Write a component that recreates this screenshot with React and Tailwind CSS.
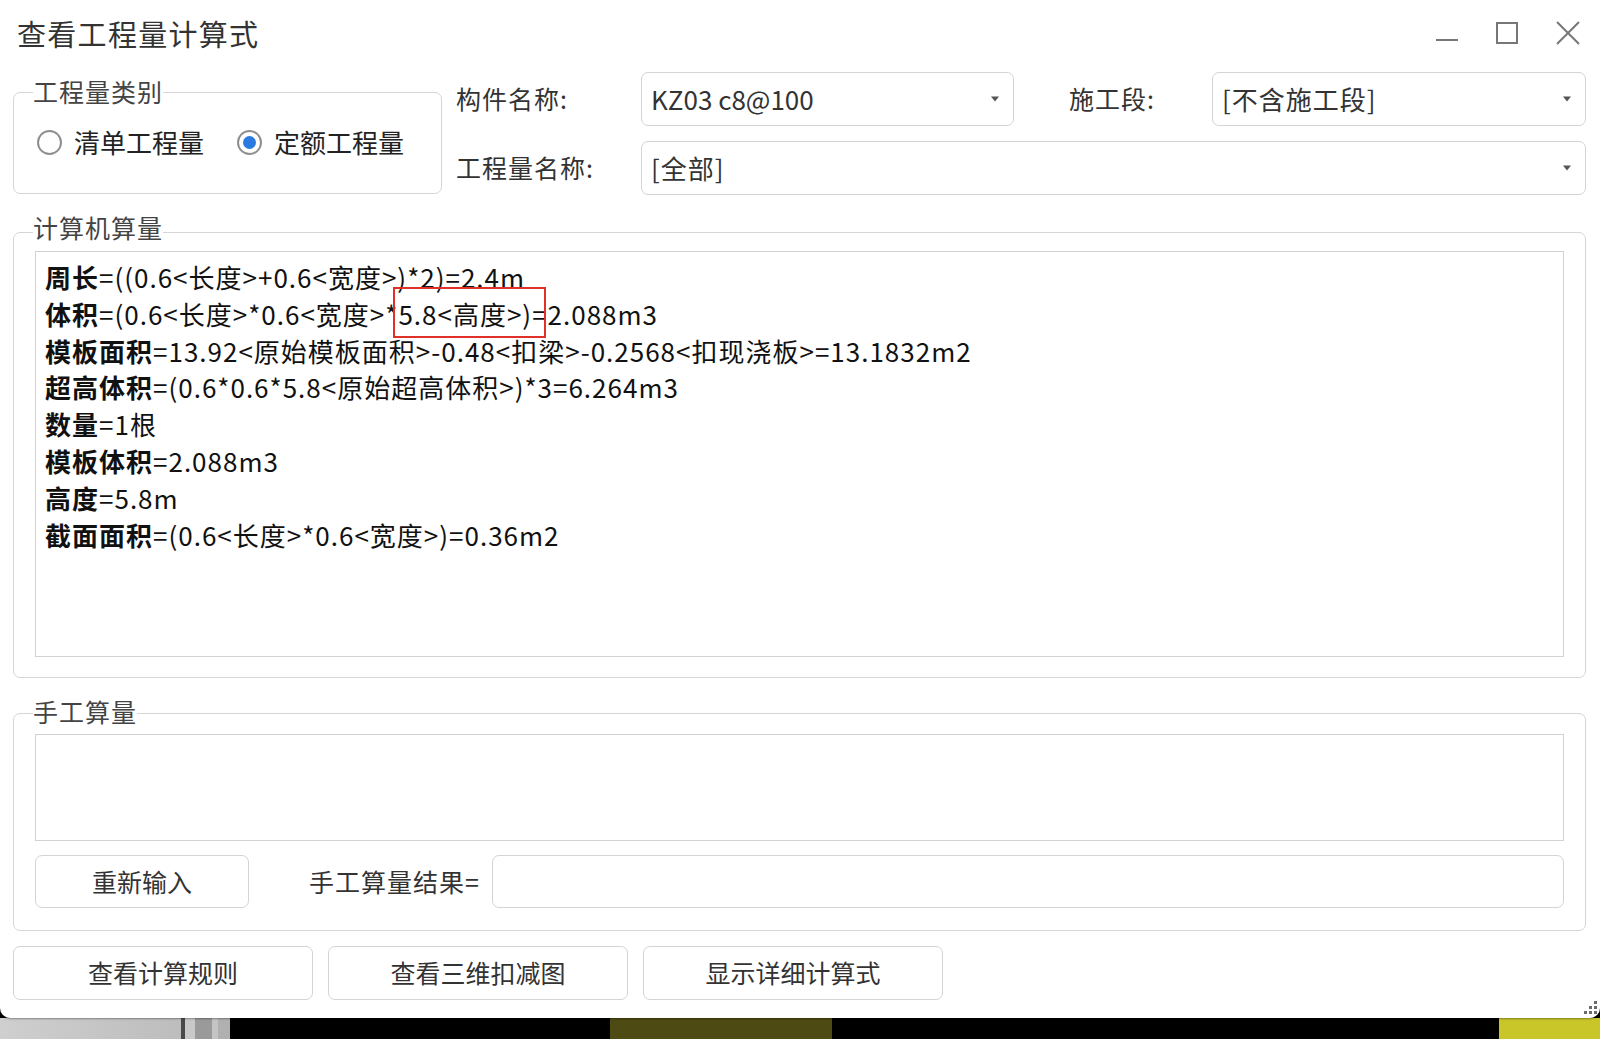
import React from "react";

const FONT = { fontFamily: '"Noto Sans CJK SC", "Noto Sans", sans-serif' };

function Arrow() {
  return (
    <svg width="10" height="6" viewBox="0 0 10 6" className="shrink-0">
      <path d="M1 0.5 L9 0.5 L5 5.5 Z" fill="#555" />
    </svg>
  );
}

function Combo({ value, className }) {
  return (
    <div
      className={`h-[54px] rounded-[7px] border border-[#d4d4d4] bg-white flex items-center pl-[9px] pr-[13px] text-[26px] text-[#333] ${className}`}
    >
      <span className="flex-1 leading-none">{value}</span>
      <Arrow />
    </div>
  );
}

function Group({ label, className, labelTop, children }) {
  return (
    <div className={`relative rounded-[7px] border border-[#d6d6d6] ${className}`}>
      <span
        className={`absolute left-[19px] ${labelTop} bg-white text-[25px] leading-[36px] tracking-[1px] text-[#444]`}
      >
        {label}
      </span>
      {children}
    </div>
  );
}

function Radio({ checked, label }) {
  return (
    <label className="flex items-center gap-[12px]">
      <span className="w-[25px] h-[25px] rounded-full border-[2px] border-[#8f8f8f] bg-white flex items-center justify-center">
        {checked && <span className="w-[13px] h-[13px] rounded-full bg-[#2a7ae2]" />}
      </span>
      <span className="text-[26px] text-[#222] leading-none">{label}</span>
    </label>
  );
}

function Btn({ children, className }) {
  return (
    <button
      className={`h-[53px] rounded-[7px] border border-[#d4d4d4] bg-white text-[25px] text-[#333] flex items-center justify-center ${className}`}
    >
      {children}
    </button>
  );
}

const lines = [
  ["周长", "=((0.6<长度>+0.6<宽度>)*2)=2.4m"],
  ["体积", "=(0.6<长度>*0.6<宽度>*5.8<高度>)=2.088m3"],
  ["模板面积", "=13.92<原始模板面积>-0.48<扣梁>-0.2568<扣现浇板>=13.1832m2"],
  ["超高体积", "=(0.6*0.6*5.8<原始超高体积>)*3=6.264m3"],
  ["数量", "=1根"],
  ["模板体积", "=2.088m3"],
  ["高度", "=5.8m"],
  ["截面面积", "=(0.6<长度>*0.6<宽度>)=0.36m2"],
];

export default function App() {
  return (
    <div className="w-[1600px] h-[1039px] flex flex-col bg-black overflow-hidden" style={FONT}>
      <div className="relative h-[1018px] bg-white rounded-b-[10px] shadow-[0_1px_2px_rgba(0,0,0,0.35)] z-10">
        {/* title bar */}
        <div className="h-[67px] flex items-center pl-[17px] pr-[20px]">
          <span className="flex-1 text-[29px] tracking-[1.3px] text-[#333] leading-none">查看工程量计算式</span>
          <div className="flex items-center gap-[38px] mt-[-2px]">
            <svg width="22" height="24" viewBox="0 0 22 24">
              <path d="M0 19 H22" stroke="#777" strokeWidth="2" />
            </svg>
            <svg width="22" height="24" viewBox="0 0 22 24">
              <rect x="1" y="2" width="20" height="20" fill="none" stroke="#777" strokeWidth="2" />
            </svg>
            <svg width="24" height="24" viewBox="0 0 24 24">
              <path d="M1 1 L23 23 M23 1 L1 23" stroke="#777" strokeWidth="2" />
            </svg>
          </div>
        </div>

        {/* top section */}
        <div className="flex pl-[13px] pr-[14px]">
          <Group label="工程量类别" labelTop="-top-[20px]" className="w-[429px] h-[102px] mt-[25px] shrink-0">
            <div className="flex items-center gap-[33px] pl-[23px] pt-[36px]">
              <Radio label="清单工程量" />
              <Radio checked label="定额工程量" />
            </div>
          </Group>
          <div className="flex-1 pl-[14px] pt-[5px] flex flex-col gap-[15px] tracking-[1px]">
            <div className="flex items-center">
              <span className="w-[185px] text-[25px] text-[#333]">构件名称:</span>
              <Combo value="KZ03 c8@100" className="w-[373px] tracking-normal" />
              <span className="w-[198px] pl-[55px] text-[25px] text-[#333]">施工段:</span>
              <Combo value="[不含施工段]" className="flex-1" />
            </div>
            <div className="flex items-center">
              <span className="w-[185px] text-[25px] text-[#333]">工程量名称:</span>
              <Combo value="[全部]" className="flex-1" />
            </div>
          </div>
        </div>

        {/* computer calc */}
        <div className="px-[14px] pl-[13px] mt-[37px]">
          <Group label="计算机算量" labelTop="-top-[24px]" className="h-[446px] pt-[18px] px-[21px]">
            <div className="relative h-[406px] border border-[#d2d2d2] pl-[9px] pt-[7px] text-[26px] leading-[36.8px] tracking-[1px] text-[#111]">
              {lines.map(([k, v]) => (
                <div key={k} className="whitespace-nowrap">
                  <span className="font-bold">{k}</span>
                  <span>{v}</span>
                </div>
              ))}
              <div className="absolute left-[357px] top-[35px] w-[153px] h-[51px] border-2 border-[#e0302a]" />
            </div>
          </Group>
        </div>

        {/* manual calc */}
        <div className="px-[14px] pl-[13px] mt-[35px]">
          <Group label="手工算量" labelTop="-top-[21px]" className="h-[218px] pt-[20px] px-[21px]">
            <div className="h-[107px] border border-[#d2d2d2]" />
            <div className="flex items-center mt-[14px]">
              <Btn className="w-[214px]">重新输入</Btn>
              <span className="w-[243px] text-right pr-[12px] text-[25px] tracking-[1px] text-[#333]">手工算量结果=</span>
              <div className="flex-1 h-[53px] rounded-[7px] border border-[#d4d4d4]" />
            </div>
          </Group>
        </div>

        {/* bottom buttons */}
        <div className="flex gap-[15px] pl-[13px] mt-[15px]">
          <Btn className="w-[300px] h-[54px]">查看计算规则</Btn>
          <Btn className="w-[300px] h-[54px]">查看三维扣减图</Btn>
          <Btn className="w-[300px] h-[54px]">显示详细计算式</Btn>
        </div>

        {/* resize grip */}
        <svg className="absolute right-[3px] bottom-[4px]" width="14" height="14" viewBox="0 0 14 14">
          <g fill="#6b6b6b">
            <rect x="11" y="1" width="3" height="3" />
            <rect x="6" y="6" width="3" height="3" />
            <rect x="11" y="6" width="3" height="3" />
            <rect x="1" y="11" width="3" height="3" />
            <rect x="6" y="11" width="3" height="3" />
            <rect x="11" y="11" width="3" height="3" />
          </g>
        </svg>
      </div>

      {/* background strip */}
      <div className="flex h-[21px] -mt-[10px] pt-[10px] box-content">
        <div className="w-[181px] bg-gradient-to-r from-[#cfcfcf] to-[#bdbdbd]" />
        <div className="w-[4px] bg-[#4a4a4a]" />
        <div className="w-[10px] bg-[#c9c9c9]" />
        <div className="w-[17px] bg-[#9a9a9a]" />
        <div className="w-[6px] bg-[#c4c4c4]" />
        <div className="w-[12px] bg-[#b0b0b0]" />
        <div className="w-[380px] bg-black" />
        <div className="w-[222px] bg-[#4d4b13]" />
        <div className="w-[667px] bg-black" />
        <div className="w-[101px] bg-[#c9c62a]" />
      </div>
    </div>
  );
}
